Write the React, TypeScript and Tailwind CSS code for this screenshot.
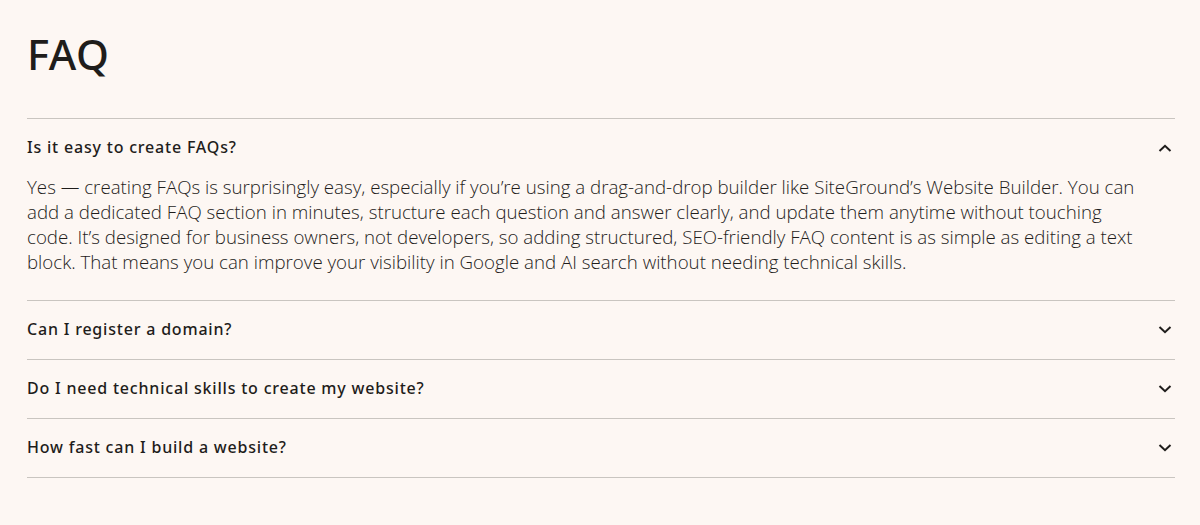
import React, { useState } from 'react';

const answerLines = [
  'Yes — creating FAQs is surprisingly easy, especially if you’re using a drag-and-drop builder like SiteGround’s Website Builder. You can',
  'add a dedicated FAQ section in minutes, structure each question and answer clearly, and update them anytime without touching',
  'code. It’s designed for business owners, not developers, so adding structured, SEO-friendly FAQ content is as simple as editing a text',
  'block. That means you can improve your visibility in Google and AI search without needing technical skills.',
];

const faqs = [
  { q: 'Is it easy to create FAQs?', a: answerLines },
  { q: 'Can I register a domain?', a: ['Yes, you can register a new domain or connect one you already own.'] },
  { q: 'Do I need technical skills to create my website?', a: ['No. The builder is made for people without coding experience.'] },
  { q: 'How fast can I build a website?', a: ['Most people publish their first site in under an hour.'] },
];

const Chevron = ({ up }: { up: boolean }) => (
  <svg width="14" height="8" viewBox="0 0 14 8" fill="none" className="shrink-0">
    {up ? (
      <path d="M1.5 7L7 1.8L12.5 7" stroke="#1f1d1b" strokeWidth="2" />
    ) : (
      <path d="M1.5 1L7 6.2L12.5 1" stroke="#1f1d1b" strokeWidth="2" />
    )}
  </svg>
);

export default function App() {
  const [open, setOpen] = useState<number | null>(0);

  return (
    <div className="min-h-screen bg-[#fdf7f3] px-[27px] pt-[28px] text-[#1f1d1b]">
      <div className="w-[1148px]">
        <h1 className="text-[42px] leading-[52px] font-medium font-['Noto_Sans',sans-serif] tracking-[0.5px] mb-[38px]">
          FAQ
        </h1>
        <div className="border-t border-[#c9c5c0]">
          {faqs.map((f, i) => (
            <div key={f.q} className="border-b border-[#c9c5c0]">
              <button
                onClick={() => setOpen(open === i ? null : i)}
                className={`w-full flex items-center justify-between pt-[19px] text-left cursor-pointer ${open === i ? 'pb-[17px]' : 'pb-[20px]'}`}
              >
                <span className="text-[16px] leading-[19px] font-medium font-['Noto_Sans',sans-serif] tracking-[0.8px]">
                  {f.q}
                </span>
                <span className="mr-[3px]">
                  <Chevron up={open === i} />
                </span>
              </button>
              {open === i && (
                <div className="pb-[26px] text-[18.7px] leading-[25px] font-light font-['Open_Sans',sans-serif]">
                  {f.a.map((line) => (
                    <p key={line} className="whitespace-nowrap">{line}</p>
                  ))}
                </div>
              )}
            </div>
          ))}
        </div>
      </div>
    </div>
  );
}
